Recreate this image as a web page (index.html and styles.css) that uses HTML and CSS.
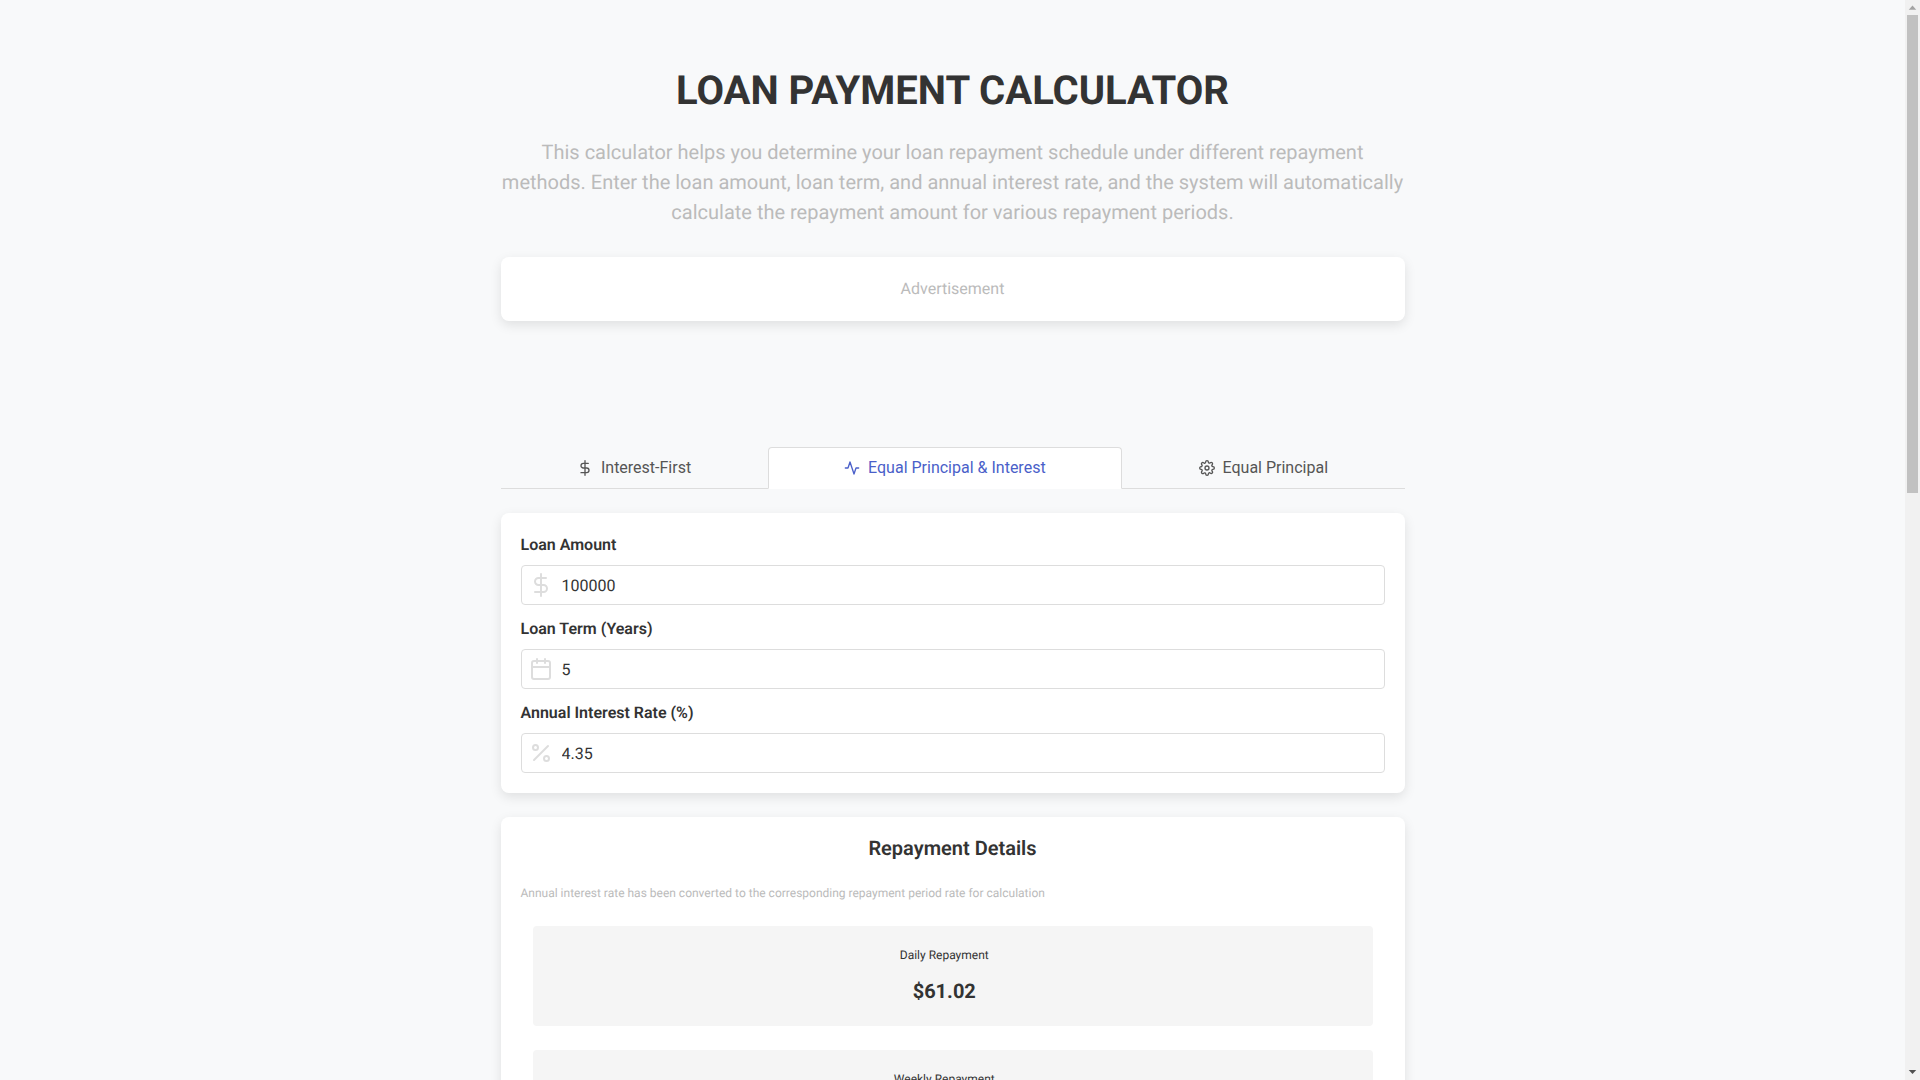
FILE: index.html
```html
<!DOCTYPE html>
<html lang="en">
<head>
<meta charset="utf-8">
<title>Loan Payment Calculator</title>
<link rel="stylesheet" href="styles.css">
</head>
<body>
<div class="window">
<div class="viewport">
<main class="container">
  <h1 class="title">LOAN PAYMENT CALCULATOR</h1>
  <p class="intro">This calculator helps you determine your loan repayment schedule under different repayment methods. Enter the loan amount, loan term, and annual interest rate, and the system will automatically calculate the repayment amount for various repayment periods.</p>
  <div class="ad card">Advertisement</div>

  <div class="tabs">
    <button class="tab" type="button">
      <svg class="tab-icon" viewBox="0 0 24 24"><line x1="12" y1="1" x2="12" y2="23"/><path d="M17 5H9.5a3.5 3.5 0 0 0 0 7h5a3.5 3.5 0 0 1 0 7H6"/></svg>
      <span>Interest-First</span>
    </button>
    <button class="tab active" type="button">
      <svg class="tab-icon" viewBox="0 0 24 24"><polyline points="22 12 18 12 15 21 9 3 6 12 2 12"/></svg>
      <span>Equal Principal &amp; Interest</span>
    </button>
    <button class="tab" type="button">
      <svg class="tab-icon" viewBox="0 0 24 24"><circle cx="12" cy="12" r="3"/><path d="M19.4 15a1.65 1.65 0 0 0 .33 1.82l.06.06a2 2 0 0 1 0 2.83 2 2 0 0 1-2.83 0l-.06-.06a1.65 1.65 0 0 0-1.82-.33 1.65 1.65 0 0 0-1 1.51V21a2 2 0 0 1-2 2 2 2 0 0 1-2-2v-.09A1.65 1.65 0 0 0 9 19.4a1.65 1.65 0 0 0-1.82.33l-.06.06a2 2 0 0 1-2.83 0 2 2 0 0 1 0-2.83l.06-.06a1.65 1.65 0 0 0 .33-1.82 1.65 1.65 0 0 0-1.51-1H3a2 2 0 0 1-2-2 2 2 0 0 1 2-2h.09A1.65 1.65 0 0 0 4.6 9a1.65 1.65 0 0 0-.33-1.82l-.06-.06a2 2 0 0 1 0-2.83 2 2 0 0 1 2.83 0l.06.06a1.65 1.65 0 0 0 1.82.33H9a1.65 1.65 0 0 0 1-1.51V3a2 2 0 0 1 2-2 2 2 0 0 1 2 2v.09a1.65 1.65 0 0 0 1 1.51 1.65 1.65 0 0 0 1.82-.33l.06-.06a2 2 0 0 1 2.83 0 2 2 0 0 1 0 2.83l-.06.06a1.65 1.65 0 0 0-.33 1.82V9a1.65 1.65 0 0 0 1.51 1H21a2 2 0 0 1 2 2 2 2 0 0 1-2 2h-.09a1.65 1.65 0 0 0-1.51 1z"/></svg>
      <span>Equal Principal</span>
    </button>
  </div>

  <form class="card form-card">
    <div class="field">
      <label class="field-label" for="amount">Loan Amount</label>
      <div class="input-wrap">
        <svg class="input-icon" viewBox="0 0 24 24"><line x1="12" y1="1" x2="12" y2="23"/><path d="M17 5H9.5a3.5 3.5 0 0 0 0 7h5a3.5 3.5 0 0 1 0 7H6"/></svg>
        <input id="amount" class="input" type="text" value="100000">
      </div>
    </div>
    <div class="field">
      <label class="field-label" for="term">Loan Term (Years)</label>
      <div class="input-wrap">
        <svg class="input-icon" viewBox="0 0 24 24"><rect x="3" y="4" width="18" height="18" rx="2" ry="2"/><line x1="16" y1="2" x2="16" y2="6"/><line x1="8" y1="2" x2="8" y2="6"/><line x1="3" y1="10" x2="21" y2="10"/></svg>
        <input id="term" class="input" type="text" value="5">
      </div>
    </div>
    <div class="field">
      <label class="field-label" for="rate">Annual Interest Rate (%)</label>
      <div class="input-wrap">
        <svg class="input-icon" viewBox="0 0 24 24"><line x1="19" y1="5" x2="5" y2="19"/><circle cx="6.5" cy="6.5" r="2.5"/><circle cx="17.5" cy="17.5" r="2.5"/></svg>
        <input id="rate" class="input" type="text" value="4.35">
      </div>
    </div>
  </form>

  <section class="card results">
    <h2 class="results-title">Repayment Details</h2>
    <p class="results-note">Annual interest rate has been converted to the corresponding repayment period rate for calculation</p>
    <div class="result"><div class="result-label">Daily Repayment</div><div class="result-value">$61.02</div></div>
    <div class="result"><div class="result-label">Weekly Repayment</div><div class="result-value">$427.14</div></div>
  </section>
</main>
</div>
<div class="scrollbar" aria-hidden="true">
  <svg class="scroll-arrow up" viewBox="0 0 15 15"><polygon points="7.5,5.5 3.75,9.75 11.25,9.75"/></svg>
  <div class="scroll-track"><div class="scroll-thumb"></div></div>
  <svg class="scroll-arrow down" viewBox="0 0 15 15"><polygon points="3.75,5 11.25,5 7.5,9"/></svg>
</div>
</div>
</body>
</html>
```

FILE: styles.css
```css
* {
  box-sizing: border-box;
}

html, body {
  margin: 0;
  padding: 0;
  height: 100%;
  overflow: hidden;
}

body {
  background: #f8f9fa;
  color: #333;
  font-family: Roboto, "Liberation Sans", sans-serif;
  font-size: 16px;
  line-height: 1.5;
  text-rendering: geometricPrecision;
}

.window {
  display: flex;
  height: 100vh;
}

.viewport {
  flex: 1 1 auto;
  min-width: 0;
  overflow: hidden;
}

.scrollbar {
  flex: 0 0 15px;
  display: flex;
  flex-direction: column;
  background: #f1f1f1;
}

.scroll-arrow {
  display: block;
  flex: none;
  width: 15px;
  height: 15px;
}

.scroll-arrow.up {
  fill: #a3a3a3;
}

.scroll-arrow.down {
  fill: #505050;
}

.scroll-track {
  flex: 1 1 auto;
  padding: 0 2px;
}

.scroll-thumb {
  height: 478px;
  background: #c1c1c1;
}

.container {
  width: 904px;
  margin: 0 auto;
  padding: 61px 0 40px;
}

.title {
  margin: 0 0 16px;
  font-size: 40px;
  line-height: 60px;
  font-weight: 700;
  text-align: center;
  color: #333;
}

.intro {
  margin: 0 0 30px;
  font-size: 20px;
  line-height: 30px;
  text-align: center;
  color: #bbb;
}

.card {
  background: #fff;
  border-radius: 8px;
  box-shadow: 0 4px 12px rgba(0, 0, 0, 0.1);
}

.ad {
  height: 64px;
  margin-bottom: 126px;
  display: flex;
  align-items: center;
  justify-content: center;
  color: #bbb;
}

.tabs {
  display: flex;
  margin-bottom: 24px;
  border-bottom: 1px solid #ddd;
}

.tab {
  flex: 1 1 auto;
  height: 42px;
  margin-bottom: -1px;
  padding: 0 16px;
  display: flex;
  align-items: center;
  justify-content: center;
  gap: 8px;
  background: transparent;
  border: 1px solid transparent;
  border-bottom: 1px solid #ddd;
  border-radius: 4px 4px 0 0;
  color: #555;
  font: inherit;
}

.tab.active {
  background: #fff;
  border-color: #ddd;
  border-bottom-color: #fff;
  color: #4a5fc9;
}

.tab-icon {
  width: 16px;
  height: 16px;
  fill: none;
  stroke: currentColor;
  stroke-width: 2;
  stroke-linecap: round;
  stroke-linejoin: round;
  flex: none;
}

.form-card {
  display: flex;
  flex-direction: column;
  gap: 12px;
  padding: 20px;
  margin-bottom: 24px;
}

.field-label {
  display: block;
  margin-bottom: 8px;
  font-weight: 600;
  color: #333;
}

.input-wrap {
  position: relative;
}

.input-icon {
  position: absolute;
  left: 8px;
  top: 8px;
  width: 24px;
  height: 24px;
  fill: none;
  stroke: #ddd;
  stroke-width: 2;
  stroke-linecap: round;
  stroke-linejoin: round;
}

.input {
  display: block;
  width: 100%;
  height: 40px;
  padding: 0 12px 0 40px;
  border: 1px solid #ddd;
  border-radius: 4px;
  background: #fff;
  color: #333;
  font: inherit;
  text-rendering: geometricPrecision;
}

.results {
  padding: 20px;
}

.results-title {
  margin: 0 0 25px;
  font-size: 20px;
  line-height: 22px;
  font-weight: 600;
  text-align: center;
  color: #333;
}

.results-note {
  margin: 0 0 24px;
  font-size: 12px;
  line-height: 18px;
  color: #bbb;
}

.result {
  margin: 0 11.5px 24px 12px;
  padding: 20px 17px 20px 0;
  background: #f5f5f5;
  border-radius: 4px;
  text-align: center;
}

.result:last-child {
  margin-bottom: 0;
}

.result-label {
  margin-bottom: 12px;
  font-size: 12px;
  line-height: 18px;
  color: #333;
}

.result-value {
  font-size: 20px;
  line-height: 30px;
  font-weight: 700;
  color: #333;
}
```
